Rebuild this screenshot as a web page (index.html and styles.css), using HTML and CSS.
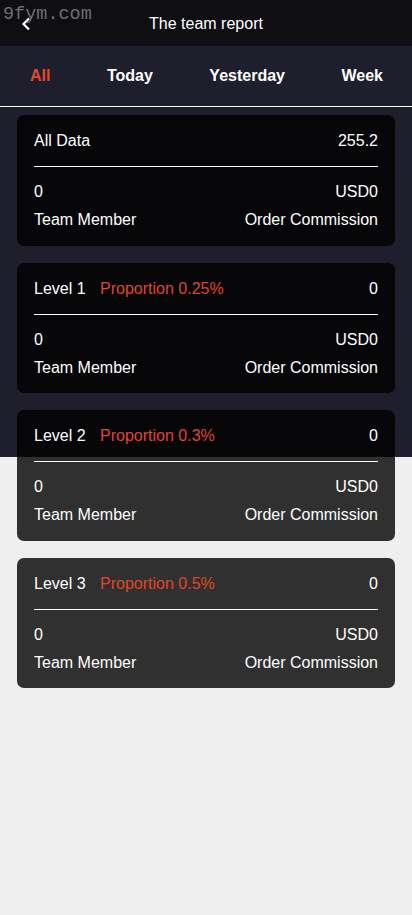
FILE: index.html
```html
<!DOCTYPE html>
<html lang="en">
<head>
  <meta charset="UTF-8" />
  <meta name="viewport" content="width=device-width, initial-scale=1.0"/>
  <title>The team report</title>
  <link rel="stylesheet" href="styles.css">
</head>
<body>
  <div class="page">
    <div class="marca">9fym.com</div>

    <header class="topo">
      <span class="voltar">
        <svg width="10" height="14" viewBox="0 0 10 14"><path d="M8 1.5 L2.5 7 L8 12.5" fill="none" stroke="#fff" stroke-width="2.2"/></svg>
      </span>
      <h1>The team report</h1>
    </header>

    <nav class="abas">
      <span class="aba ativa">All</span>
      <span class="aba">Today</span>
      <span class="aba">Yesterday</span>
      <span class="aba">Week</span>
    </nav>

    <div class="lista">
      <div class="cartao">
        <div class="linha">
          <span>All Data</span>
          <span>255.2</span>
        </div>
        <div class="divisor"></div>
        <div class="linha">
          <span>0</span>
          <span>USD0</span>
        </div>
        <div class="linha legenda">
          <span>Team Member</span>
          <span>Order Commission</span>
        </div>
      </div>

      <div class="cartao">
        <div class="linha">
          <span>Level 1 <em class="proporcao">Proportion 0.25%</em></span>
          <span>0</span>
        </div>
        <div class="divisor"></div>
        <div class="linha">
          <span>0</span>
          <span>USD0</span>
        </div>
        <div class="linha legenda">
          <span>Team Member</span>
          <span>Order Commission</span>
        </div>
      </div>

      <div class="cartao">
        <div class="linha">
          <span>Level 2 <em class="proporcao">Proportion 0.3%</em></span>
          <span>0</span>
        </div>
        <div class="divisor"></div>
        <div class="linha">
          <span>0</span>
          <span>USD0</span>
        </div>
        <div class="linha legenda">
          <span>Team Member</span>
          <span>Order Commission</span>
        </div>
      </div>

      <div class="cartao">
        <div class="linha">
          <span>Level 3 <em class="proporcao">Proportion 0.5%</em></span>
          <span>0</span>
        </div>
        <div class="divisor"></div>
        <div class="linha">
          <span>0</span>
          <span>USD0</span>
        </div>
        <div class="linha legenda">
          <span>Team Member</span>
          <span>Order Commission</span>
        </div>
      </div>
    </div>
  </div>
</body>
</html>
```

FILE: styles.css
```css
body {
  margin: 0;
  font-family: "Liberation Sans", Arial, sans-serif;
  background: #efefef;
  color: #fff;
}
.page {
  position: relative;
  min-height: 915px;
  background: linear-gradient(#1e1e2c 457px, #efefef 457px);
}
.marca {
  position: absolute;
  z-index: 5;
  top: 4px;
  left: 3px;
  font-family: "Liberation Mono", monospace;
  font-size: 18.5px;
  color: #808080;
  opacity: 0.85;
}
.topo {
  height: 46px;
  padding-top: 2px;
  box-sizing: border-box;
  background: #0e0e13;
  display: flex;
  align-items: center;
  justify-content: center;
  position: relative;
}
.topo h1 {
  margin: 0;
  font-size: 16px;
  font-weight: normal;
}
.voltar {
  position: absolute;
  left: 21px;
  top: 17px;
  display: flex;
}
.abas {
  height: 61px;
  display: flex;
  align-items: center;
  justify-content: space-between;
  padding: 0 29px 0 30px;
  box-sizing: border-box;
  border-bottom: 1px solid #fff;
}
.aba {
  font-size: 16px;
  font-weight: bold;
}
.aba.ativa {
  color: #e8472a;
}
.lista {
  padding: 8px 17px;
  display: flex;
  flex-direction: column;
  gap: 17px;
}
.cartao {
  background: rgba(0, 0, 0, 0.8);
  border-radius: 7px;
  padding: 17px 17px 16.5px;
}
.linha {
  display: flex;
  justify-content: space-between;
  font-size: 16px;
  line-height: 18px;
}
.legenda {
  margin-top: 10px;
}
.divisor {
  height: 1px;
  background: #fff;
  margin: 16px 0 16px;
}
.proporcao {
  font-style: normal;
  color: #e0452a;
  margin-left: 10px;
}
```
